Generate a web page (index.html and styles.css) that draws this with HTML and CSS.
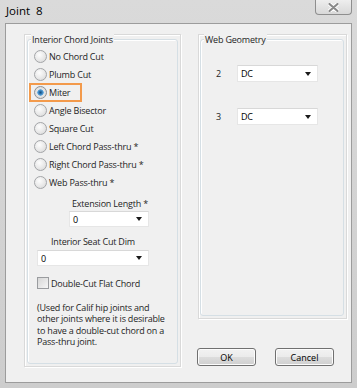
FILE: index.html
```html
<!DOCTYPE html>
<html>
  <head>
    <title>Joint 8</title>
    <link rel="stylesheet" href="styles.css">
  </head>
  <body>
    <div class="window">
      <div class="titlebar">
        <span class="title">Joint&nbsp; 8</span>
        <div class="close">
          <svg width="11" height="9" viewBox="0 0 11 9">
            <path d="M1.5 1 L9.5 8 M9.5 1 L1.5 8" stroke="#fff" stroke-width="4" stroke-linecap="round" />
            <path d="M1.5 1 L9.5 8 M9.5 1 L1.5 8" stroke="#8a8a8a" stroke-width="2.2" stroke-linecap="round" />
          </svg>
        </div>
      </div>

      <div class="client">
        <div class="panel left">
          <div class="group">
            <div class="legend">Interior Chord Joints</div>
            <div class="options">
              <div class="row"><span class="opt"><span class="radio"></span>No Chord Cut</span></div>
              <div class="row"><span class="opt"><span class="radio"></span>Plumb Cut</span></div>
              <div class="row"><span class="opt hl"><span class="radio checked"></span>Miter</span></div>
              <div class="row"><span class="opt"><span class="radio"></span>Angle Bisector</span></div>
              <div class="row"><span class="opt"><span class="radio"></span>Square Cut</span></div>
              <div class="row"><span class="opt"><span class="radio"></span>Left Chord Pass-thru *</span></div>
              <div class="row"><span class="opt"><span class="radio"></span>Right Chord Pass-thru *</span></div>
              <div class="row"><span class="opt"><span class="radio"></span>Web Pass-thru *</span></div>
            </div>

            <div class="flabel ext-label">Extension Length *</div>
            <div class="select ext-select"><span>0</span><i class="arrow"></i></div>

            <div class="flabel seat-label">Interior Seat Cut Dim</div>
            <div class="select seat-select"><span>0</span><i class="arrow"></i></div>

            <div class="row check-row"><span class="opt"><span class="checkbox"></span>Double-Cut Flat Chord</span></div>

            <p class="note">(Used for Calif hip joints and other joints where it is desirable to have a double-cut chord on a Pass-thru joint.</p>
          </div>
        </div>

        <div class="side">
          <div class="panel right">
            <div class="group">
              <div class="legend">Web Geometry</div>
              <div class="web-row first">
                <span class="web-num">2</span>
                <div class="select web-select"><span>DC</span><i class="arrow"></i></div>
              </div>
              <div class="web-row">
                <span class="web-num">3</span>
                <div class="select web-select"><span>DC</span><i class="arrow"></i></div>
              </div>
            </div>
          </div>

          <div class="buttons">
            <button class="btn">OK</button>
            <button class="btn">Cancel</button>
          </div>
        </div>
      </div>
    </div>
  </body>
</html>
```

FILE: styles.css
```css
html,
body {
  margin: 0;
  padding: 0;
  background: #fff;
}
body {
  font-family: "Open Sans", "Noto Sans", sans-serif;
  font-size: 9px;
  letter-spacing: -0.2px;
  color: #1e1e1e;
}
.window {
  width: 357px;
  height: 388px;
  box-sizing: border-box;
  display: flex;
  flex-direction: column;
  background: linear-gradient(#dadada, #cdcdcd);
}
.titlebar {
  height: 23px;
  flex: none;
  display: flex;
  justify-content: space-between;
  align-items: flex-start;
  padding: 0 5px 0 6px;
}
.title {
  font-size: 11.5px;
  letter-spacing: 0;
  line-height: 22px;
  color: #000;
}
.close {
  width: 37px;
  height: 15px;
  box-sizing: border-box;
  border: 1px solid #8e8e8e;
  border-top: none;
  border-radius: 0 0 4px 4px;
  background: linear-gradient(#eeeeee, #d8d8d8);
  display: flex;
  align-items: center;
  justify-content: center;
}

/* client area */
.client {
  flex: 1;
  margin: 0 5px 5px 5px;
  border: 1px solid #9c9c9c;
  background: #f0f0f0;
  display: flex;
  padding: 10px 0 0 18px;
}
.panel {
  border: 1px solid #d9d9d9;
  box-shadow: inset 1px 1px 0 #fff, 1px 1px 0 #fff;
  display: flex;
  flex-direction: column;
  box-sizing: border-box;
}
.panel.left {
  width: 157px;
  height: 333px;
}
.side {
  width: 149px;
  height: 333px;
  margin-left: 17px;
  display: flex;
  flex-direction: column;
}
.panel.right {
  height: 285px;
}
.group {
  flex: 1;
  margin: 4px 2px 2px 2px;
  border: 1px solid #d5dfe5;
  border-radius: 3px;
  box-shadow: inset 1px 1px 0 #fff;
}
.panel.right .group {
  margin-left: 1px;
}
.legend {
  width: fit-content;
  margin: -7px 0 0 3px;
  padding: 0 1px;
  line-height: 13px;
  background: #f0f0f0;
}

/* radio rows */
.options {
  margin-top: 1px;
}
.row {
  height: 18px;
  display: flex;
  align-items: center;
  padding-left: 6px;
}
.opt {
  display: flex;
  align-items: center;
  gap: 2px;
  white-space: nowrap;
}
.opt.hl {
  box-sizing: border-box;
  width: 49px;
  height: 15px;
  margin-left: -3px;
  padding-left: 3px;
  box-shadow: 0 0 0 2px #f39a4b;
}
.radio {
  width: 11px;
  height: 11px;
  border-radius: 50%;
  border: 1px solid #a3a5a8;
  background: radial-gradient(circle at 40% 35%, #fdfdfd, #e6e6e6 60%, #d3d3d3);
}
.radio.checked {
  border-color: #8f9194;
  background: radial-gradient(circle, #174f7d 0, #2f78b5 1.6px, #6aaee0 3px, #e6e6e6 3.4px, #d6d6d6 100%);
}
.checkbox {
  width: 10px;
  height: 10px;
  border: 1px solid #9a9c9f;
  background: linear-gradient(135deg, #d6d6d6, #f6f6f6);
}

/* dropdowns */
.select {
  box-sizing: border-box;
  height: 16px;
  background: #fff;
  border: 1px solid #e6e6e6;
  border-top-color: #d8d8d8;
  display: flex;
  align-items: center;
  justify-content: space-between;
  padding: 0 6px 0 3px;
  color: #000;
}
.arrow {
  width: 0;
  height: 0;
  border-left: 3.5px solid transparent;
  border-right: 3.5px solid transparent;
  border-top: 4px solid #1a1a1a;
}
.flabel {
  line-height: 13px;
}
.ext-label {
  margin: 6px 0 0 44px;
}
.ext-select {
  width: 80px;
  margin: 1px 0 0 41px;
}
.seat-label {
  margin: 8px 0 0 23px;
}
.seat-select {
  width: 112px;
  margin: 2px 0 0 9px;
}
.check-row {
  margin-top: 8px;
  padding-left: 9px;
}
.note {
  margin: 10px 4px 0 9px;
  line-height: 11.4px;
}

/* web geometry */
.web-row {
  display: flex;
  align-items: center;
  margin: 26px 0 0 15px;
}
.web-row.first {
  margin-top: 19px;
}
.web-num {
  width: 21px;
}
.web-select {
  width: 81px;
  height: 17px;
}

/* buttons */
.buttons {
  margin-top: auto;
  margin-bottom: 1px;
  display: flex;
  gap: 19px;
  margin-left: -1px;
}
.btn {
  width: 59px;
  height: 18px;
  padding: 0;
  font: inherit;
  color: #000;
  border: 1px solid #707070;
  border-radius: 3px;
  background: linear-gradient(#f2f2f2, #ebebeb 50%, #dddddd 50%, #cfcfcf);
  box-shadow: inset 0 0 0 1px #fcfcfc;
}
```
